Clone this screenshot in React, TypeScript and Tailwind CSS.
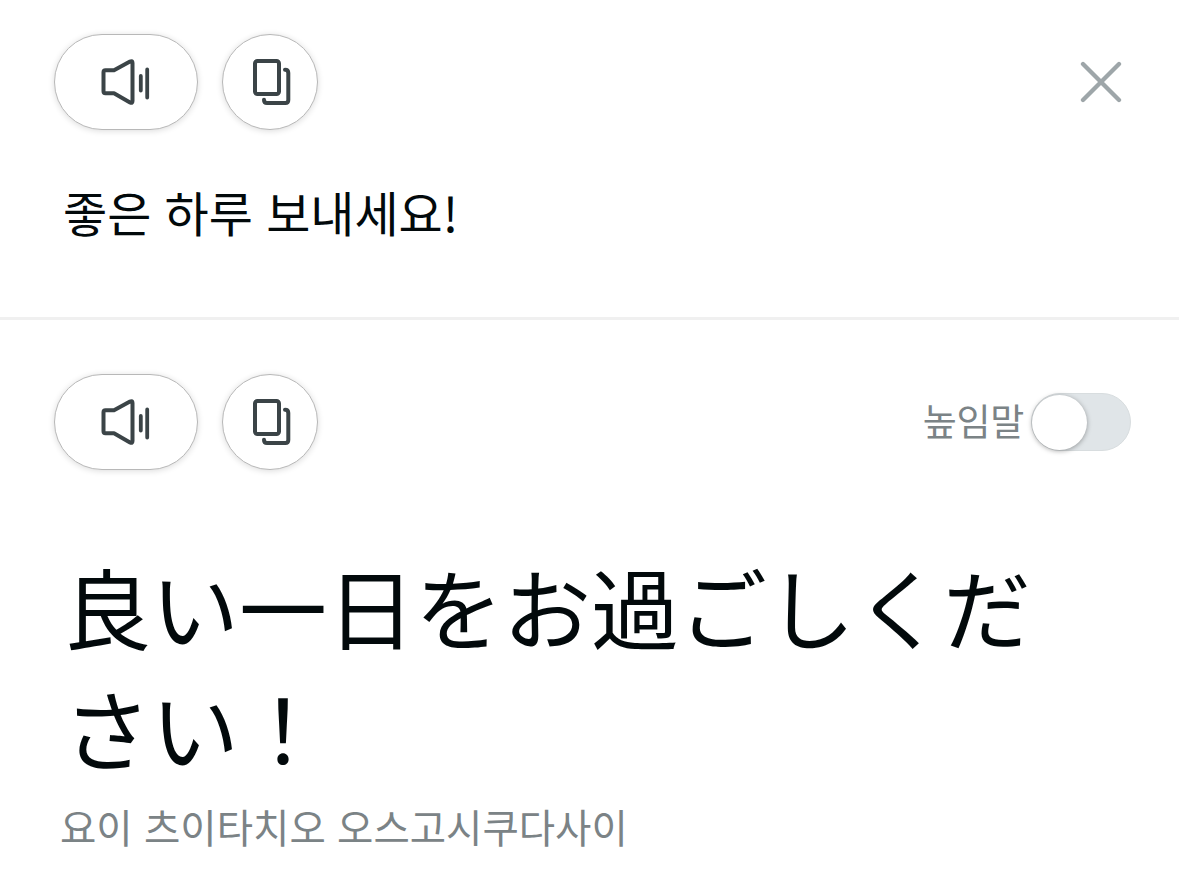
import React from 'react';

function SpeakerIcon() {
  return (
    <svg width="50" height="48" viewBox="0 0 50 48" fill="none" stroke="#3b4447" strokeWidth="4" strokeLinecap="round" strokeLinejoin="round">
      <path d="M4.500 12.300H13L29 3.500Q31.500 2.300 31.500 5V43Q31.500 45.700 29 44.500L13 35.300H4.500Q2.500 35.300 2.500 33.300V14.300Q2.500 12.300 4.500 12.300Z" />
      <path d="M39.800 18V32.500M46.200 11.500V39.500" strokeWidth="3.800" />
    </svg>
  );
}

function CopyIcon() {
  return (
    <svg width="42" height="48" viewBox="0 0 42 48" fill="none" stroke="#3b4447" strokeWidth="4" strokeLinecap="round" strokeLinejoin="round">
      <rect x="6" y="3" width="24" height="33" rx="2.500" />
      <path d="M36 11.700Q39.300 11.700 39.300 15V42Q39.300 45 36.300 45H18Q15 45 15 41.700" />
    </svg>
  );
}

function Actions() {
  return (
    <div className="flex gap-6">
      <button className="flex h-24 w-36 items-center justify-center rounded-full border border-[#b8b8b8] bg-white shadow-[0_1px_6px_rgba(0,0,0,0.14)]">
        <SpeakerIcon />
      </button>
      <button className="flex size-24 items-center justify-center rounded-full border border-[#b8b8b8] bg-white shadow-[0_1px_6px_rgba(0,0,0,0.14)]">
        <CopyIcon />
      </button>
    </div>
  );
}

export default function App() {
  return (
    <main className="h-[871px] w-[1179px] overflow-hidden bg-white font-['Noto_Sans_CJK_KR',sans-serif] text-[#02090b]">
      {/* Source text */}
      <section className="h-[320px] border-b-[3px] border-[#f0f0f0] pl-[54px] pr-[57px] pt-[34px]">
        <div className="flex items-center justify-between">
          <Actions />
          <button>
            <svg width="42" height="42" viewBox="0 0 42 42" stroke="#9ea6a9" strokeWidth="4.300" strokeLinecap="round">
              <path d="M3 3L39 39M39 3L3 39" />
            </svg>
          </button>
        </div>
        <p className="mt-[46px] ml-[9px] text-[48px] leading-[70px] [word-spacing:2.5px]">좋은 하루 보내세요!</p>
      </section>

      {/* Translation */}
      <section className="pl-[54px] pr-12 pt-[54px]">
        <div className="flex items-center justify-between">
          <Actions />
          <div className="flex items-center gap-[7px] text-[37px] text-[#7b8386]">
            <span className="-mt-[3px] tracking-[-0.3px]">높임말</span>
            <span className="flex h-[58px] w-[100px] items-center rounded-full border border-[#d8dddf] bg-[#e0e5e8]">
              <span className="size-[55px] rounded-full bg-white shadow-[0_1px_5px_rgba(0,0,0,0.35)]" />
            </span>
          </div>
        </div>
        <p lang="ja" className="mt-[74px] ml-[9px] font-['Noto_Sans_CJK_JP',sans-serif] text-[88px] leading-[121px]">
          良い一日をお過ごしくだ<br />さい！
        </p>
        <p className="mt-[10px] ml-[6px] text-[39.500px] leading-[60px] text-[#7b8386] [word-spacing:2.5px]">요이 츠이타치오 오스고시쿠다사이</p>
      </section>
    </main>
  );
}
